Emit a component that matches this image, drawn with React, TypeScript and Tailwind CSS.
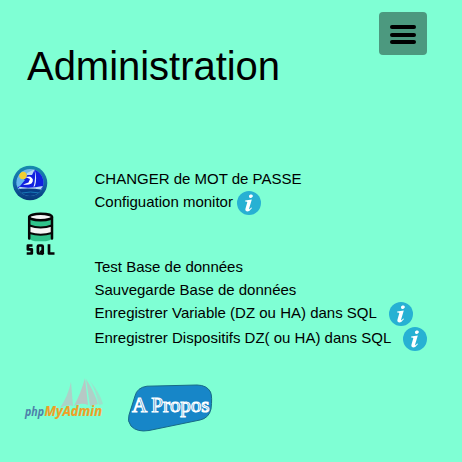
function InfoIcon({ className = '' }: { className?: string }) {
  return (
    <svg viewBox="0 0 24 24" className={`h-6 w-6 shrink-0 ${className}`}>
      <circle cx="12" cy="12" r="12" fill="#27b1d3" />
      <ellipse cx="13.9" cy="5.2" rx="2" ry="1.7" fill="#fff" transform="rotate(-20 13.9 5.2)" />
      <path
        d="M8.2 9.6 L14.8 8.5 L12.2 17.3 Q11.9 18.7 12.8 17.9 L14.3 16.4 L15 17 Q12.6 20.5 10.1 20.4 Q7.8 20.2 8.5 17.6 L10.3 11.3 Q10.5 10.5 8.1 10.6 Z"
        fill="#fff"
      />
    </svg>
  );
}

function SailLogo() {
  return (
    <svg viewBox="0 0 36 36" className="h-9 w-9">
      <defs>
        <linearGradient id="ring" x1="0" y1="0" x2="0" y2="1">
          <stop offset="0" stopColor="#168bad" />
          <stop offset="0.5" stopColor="#1268aa" />
          <stop offset="1" stopColor="#063779" />
        </linearGradient>
        <clipPath id="disc">
          <circle cx="18" cy="17.5" r="13.5" />
        </clipPath>
      </defs>
      <circle cx="18" cy="18" r="17.3" fill="url(#ring)" />
      <g clipPath="url(#disc)">
        <rect width="36" height="36" fill="#72b7e8" />
        <path d="M13 12 L17 9 L24 4 L34 12 V24 L5 23 L9 19 Z" fill="#1020e0" />
        <path d="M5 13 Q9 12 13 15 L8 21 H4 Z" fill="#65b6ee" />
        <circle cx="11" cy="10.5" r="3.8" fill="#f2cf32" />
        <path d="M15 8 L23 4 L20 10 L15 10 Z" fill="#b5d8f4" />
        <path d="M22.5 4 Q25.5 14 23 21 L21.5 22 Q24 13 22.5 4 Z" fill="#dceeff" />
        <path d="M13.5 12 L18 11.5 Q23 14 19.5 18.5 Q16 20.5 11 19.5 L16.5 17.5 L18 14 Z" fill="#fff" />
        <path d="M6 21.5 Q16 24 31 21 L29 24 Q16 25 8 23.5 Z" fill="#bbdcf5" />
        <path d="M5 24.5 Q16 22.5 31 25 L26 33 H10 Z" fill="#073c86" />
        <path d="M10 28 Q18 26 28 28" stroke="#1779b7" fill="none" />
      </g>
    </svg>
  );
}

function SqlLogo() {
  return (
    <svg viewBox="0 0 32 44" className="h-11 w-8">
      <path d="M5.2 5 V27 Q8 29 11 29.2 H22 Q26 28.5 28 27 V5" fill="#30c48c" />
      <path d="M5.5 14 Q16.5 18 28 14 V21 Q16.5 24.5 5.5 21 Z" fill="#f5f5f5" />
      <g fill="none" stroke="#060606" strokeWidth="2.5" strokeLinecap="round">
        <ellipse cx="16.6" cy="5" rx="11.4" ry="3.2" fill="#f5f5f5" />
        <path d="M5.2 5 V26.5 M28 5 V26.5" />
        <path d="M5.5 13.5 Q16.5 17.5 28 13.5 M5.5 21 Q16.5 24.5 28 21" strokeWidth="2.2" />
      </g>
      <g fill="none" stroke="#060606" strokeWidth="2.7" strokeLinejoin="round">
        <path d="M8.5 33.5 H3.9 V37.4 H7.8 V41.5 H2.7" />
        <rect x="13.9" y="33.5" width="4.8" height="8" rx="1" />
        <path d="M16.7 38.5 L19.2 42.5 M25 32.3 V41.5 H30.5" />
      </g>
    </svg>
  );
}

function PhpMyAdminLogo() {
  return (
    <svg viewBox="0 0 80 42" className="h-[42px] w-20 overflow-visible">
      <g fill="#b7c8c5">
        <path d="M35 29 Q43 17 46 3 L48 27 Q42 25 35 29 Z" opacity="0.8" />
        <path d="M49 27 Q56 14 60 -1 L63 26 Q56 23 49 27 Z" />
        <path d="M61 0 Q69 12 73 25 L65 27 Z" opacity="0.85" />
        <path d="M65 2 Q75 14 78 25 L74 26 Q71 12 65 2 Z" opacity="0.55" />
      </g>
      <text x="0" y="36.5" fill="#4d80a9" fontSize="11.5" fontWeight="700" fontStyle="italic" fontFamily="'Open Sans', sans-serif" textLength="19" lengthAdjust="spacingAndGlyphs">php</text>
      <text x="19.5" y="37" fill="#f09f26" stroke="#f09f26" strokeWidth="0.2" fontSize="13.5" fontWeight="700" fontStyle="italic" fontFamily="'Open Sans', sans-serif" textLength="57.5" lengthAdjust="spacingAndGlyphs">MyAdmin</text>
    </svg>
  );
}

function AboutButton() {
  return (
    <svg viewBox="0 0 86 50" className="h-[50px] w-[86px]">
      <path
        d="M8 12 Q10 3.5 20 2.2 L70 1 Q80 1.2 83.5 8 Q85.5 13 84 25 Q82 34 73 36 L22 46.5 Q10 48.5 4 42 Q0 37 2 31 Z"
        fill="#1786c8"
        stroke="#176a86"
      />
      <text x="5" y="27.5" fill="#1786c8" stroke="#fff" strokeWidth="1.1" fontSize="20" fontFamily="'Liberation Serif', serif" textLength="77.5" lengthAdjust="spacingAndGlyphs">A Propos</text>
    </svg>
  );
}

export default function App() {
  return (
    <main className="h-[462px] w-[462px] overflow-hidden bg-[#7fffd4] font-['Liberation_Sans',Arial,sans-serif] text-[15px] text-black">
      <header className="flex h-[167px] items-start justify-between pr-[35px] pl-[27px]">
        <h1 className="pt-[42px] text-[40px] leading-[48px] tracking-[-0.03px]">Administration</h1>
        <button aria-label="Menu" className="mt-3 flex h-[43px] w-12 flex-col items-center justify-center gap-[3.5px] rounded bg-[#4c997f] pt-[2px]">
          <span className="h-1 w-[26px] rounded-full bg-black" />
          <span className="h-1 w-[26px] rounded-full bg-black" />
          <span className="h-1 w-[26px] rounded-full bg-black" />
        </button>
      </header>
      <section className="flex h-[210px]">
        <aside className="w-[94.5px] pl-[11.5px]">
          <div className="-mt-[2px] h-[45px]"><SailLogo /></div>
          <div className="pt-[2px] pl-[12px]"><SqlLogo /></div>
        </aside>
        <nav className="whitespace-nowrap">
          <div className="flex h-6 items-center">CHANGER de MOT de PASSE</div>
          <div className="mb-[40px] flex h-6 items-center"><span className="-mt-[2px]">Configuation monitor</span><InfoIcon className="ml-1" /></div>
          <div className="h-[23px] leading-[23px]">Test Base de données</div>
          <div className="h-[23px] leading-[23px]">Sauvegarde Base de données</div>
          <div className="flex h-[25px] items-center">Enregistrer Variable (DZ ou HA) dans SQL<InfoIcon className="ml-3" /></div>
          <div className="flex h-[25px] items-center">Enregistrer Dispositifs DZ( ou HA) dans SQL<InfoIcon className="ml-3" /></div>
        </nav>
      </section>
      <footer className="flex gap-[22px] pt-[2px] pl-[25px]">
        <PhpMyAdminLogo />
        <div className="pt-[5px]"><AboutButton /></div>
      </footer>
    </main>
  );
}
